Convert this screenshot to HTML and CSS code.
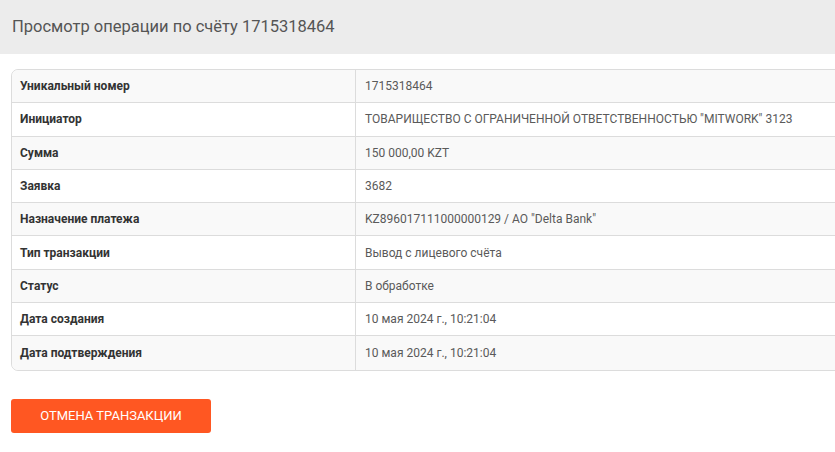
FILE: index.html
```html
<!DOCTYPE html>
<html lang="ru">
<head>
<meta charset="utf-8">
<link rel="stylesheet" href="styles.css">
</head>
<body>
<header class="page-head">
  <h1 class="page-title">Просмотр операции по счёту 1715318464</h1>
</header>
<main class="content">
  <div class="table-wrap">
    <table class="details">
      <tbody>
        <tr><th>Уникальный номер</th><td>1715318464</td></tr>
        <tr><th>Инициатор</th><td>ТОВАРИЩЕСТВО С ОГРАНИЧЕННОЙ ОТВЕТСТВЕННОСТЬЮ "MITWORK" 3123</td></tr>
        <tr><th>Сумма</th><td>150 000,00 KZT</td></tr>
        <tr><th>Заявка</th><td>3682</td></tr>
        <tr><th>Назначение платежа</th><td>KZ896017111000000129 / АО "Delta Bank"</td></tr>
        <tr><th>Тип транзакции</th><td>Вывод с лицевого счёта</td></tr>
        <tr><th>Статус</th><td>В обработке</td></tr>
        <tr><th>Дата создания</th><td>10 мая 2024 г., 10:21:04</td></tr>
        <tr><th>Дата подтверждения</th><td>10 мая 2024 г., 10:21:04</td></tr>
      </tbody>
    </table>
  </div>
  <button class="btn-cancel" type="button">Отмена транзакции</button>
</main>
</body>
</html>
```

FILE: styles.css
```css
html, body {
  margin: 0;
  padding: 0;
  background: #fff;
  overflow: hidden;
}
body {
  font-family: Roboto, "Liberation Sans", sans-serif;
  color: #555;
  width: 835px;
  height: 452px;
}
.page-head {
  background: #ececec;
  height: 54px;
  display: flex;
  align-items: center;
  padding: 0 12px;
  box-sizing: border-box;
}
.page-title {
  margin: 0;
  font-size: 16.5px;
  font-weight: 400;
  color: #555;
  line-height: 20px;
}
.content {
  padding: 15px 0 0 11px;
}
.table-wrap {
  width: 850px;
}
.details {
  width: 100%;
  border-collapse: separate;
  border-spacing: 0;
  border: 1px solid #dcdcdc;
  border-radius: 7px;
  font-size: 12px;
  table-layout: fixed;
}
.details th,
.details td {
  height: 33.3px;
  box-sizing: border-box;
  padding: 0 8px;
  text-align: left;
  vertical-align: middle;
  border-bottom: 1px solid #dcdcdc;
  line-height: 14px;
}
.details tr:last-child th,
.details tr:last-child td {
  border-bottom: none;
}
.details th {
  width: 344px;
  font-weight: 700;
  color: #333;
  border-right: 1px solid #dcdcdc;
}
.details td {
  padding-left: 9px;
  color: #5a5a5a;
}
.details tr:nth-child(odd) th,
.details tr:nth-child(odd) td {
  background: #f9f9f9;
}
.details tr:first-child th { border-top-left-radius: 7px; }
.details tr:last-child th { border-bottom-left-radius: 7px; }
.btn-cancel {
  margin-top: 28px;
  width: 200px;
  height: 34px;
  border: none;
  border-radius: 3px;
  background: #ff5722;
  color: #fff;
  font-family: Roboto, "Liberation Sans", sans-serif;
  font-size: 13px;
  font-weight: 400;
  text-transform: uppercase;
  cursor: pointer;
  padding: 0;
}
```
